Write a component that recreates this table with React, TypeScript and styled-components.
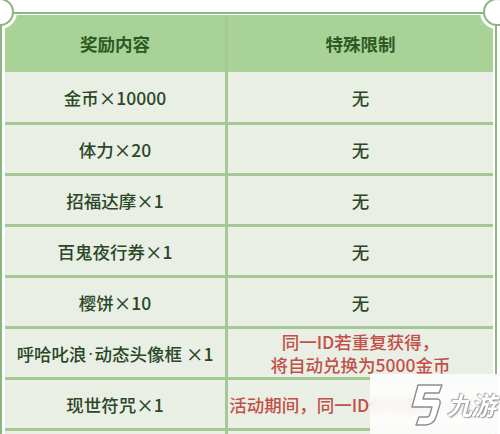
import styled, { createGlobalStyle } from 'styled-components';

const GlobalStyle = createGlobalStyle`
  html, body {
    margin: 0;
    padding: 0;
    background: #ffffff;
  }
  body {
    font-family: "Noto Sans CJK SC", "Noto Sans", sans-serif;
  }
`;

const Page = styled.div`
  position: relative;
  width: 500px;
  height: 434px;
  overflow: hidden;
  background: #ffffff;
`;

const Frame = styled.div`
  position: relative;
  margin: 12px 3px 0 0;
  border: 2px solid #8db581;
  border-bottom: none;
  padding: 1px 2px 0 3px;
  background: #ffffff;
`;

const OuterNotch = styled.span<{ $side: 'left' | 'right' }>`
  position: absolute;
  top: -16px;
  ${(p) => (p.$side === 'left' ? 'left: -16px;' : 'right: -16px;')}
  width: 28px;
  height: 28px;
  box-sizing: border-box;
  border-radius: 50%;
  border: 2px solid #8db581;
  background: #ffffff;
  z-index: 3;
`;

const Table = styled.div`
  position: relative;
  overflow: hidden;
`;

const InnerNotch = styled.span<{ $side: 'left' | 'right' }>`
  position: absolute;
  top: -20px;
  ${(p) => (p.$side === 'left' ? 'left: -22px;' : 'right: -21px;')}
  width: 34px;
  height: 34px;
  border-radius: 50%;
  background: #ffffff;
  z-index: 2;
`;

const Row = styled.div<{ $h: number; $head?: boolean }>`
  display: grid;
  grid-template-columns: 220px 265px;
  column-gap: 3px;
  box-sizing: border-box;
  height: ${(p) => p.$h}px;
  background: #a4c896;
  border-bottom: ${(p) => (p.$head ? 'none' : '3px solid #a4c896')};
`;

const Cell = styled.div<{ $head?: boolean; $red?: boolean }>`
  display: flex;
  align-items: center;
  justify-content: center;
  text-align: center;
  white-space: nowrap;
  background: ${(p) => (p.$head ? '#a9d296' : '#e9efe4')};
  color: ${(p) => (p.$head ? '#2c5a25' : p.$red ? '#c24f49' : '#2b4728')};
  font-size: 17.5px;
  line-height: 23px;
  font-weight: ${(p) => (p.$head ? 700 : 500)};
`;

const Dot = styled.span`
  font-family: "Liberation Sans", sans-serif;
  margin: 0 1px;
`;

const Watermark = styled.div`
  position: absolute;
  left: 370px;
  top: 374px;
  width: 130px;
  height: 60px;
  display: flex;
  align-items: center;
  gap: 3px;
  padding-left: 40px;
  box-sizing: border-box;
  background: rgba(255, 255, 255, 0.86);
  backdrop-filter: blur(3px);
  z-index: 5;
`;

const LogoText = styled.span`
  font-family: "Noto Sans CJK SC", sans-serif;
  font-size: 25px;
  font-weight: 700;
  font-style: italic;
  color: #ffffff;
  letter-spacing: -1px;
  text-shadow: 0 0 1px #8a8a8a, 1px 1px 1px #9a9a9a, -1px -1px 1px #b0b0b0;
`;

function LogoMark() {
  return (
    <svg width="34" height="46" viewBox="0 0 34 46">
      <path
        d="M8 4 L32 4 L29 12 L15 12 L13 18 L27 18 Q31 18 30 23 L26 36 Q24 43 16 44 L6 44 L9 36 L17 36 Q19 36 20 33 L22 26 L2 26 Z"
        fill="#ffffff"
        stroke="#8c8c8c"
        strokeWidth="1.4"
        strokeLinejoin="round"
      />
    </svg>
  );
}

type Reward = { name: React.ReactNode; key: string; limit: string[]; red?: boolean };

const rewards: Reward[] = [
  { key: 'coin', name: '金币×10000', limit: ['无'] },
  { key: 'stamina', name: '体力×20', limit: ['无'] },
  { key: 'daruma', name: '招福达摩×1', limit: ['无'] },
  { key: 'ticket', name: '百鬼夜行券×1', limit: ['无'] },
  { key: 'mochi', name: '樱饼×10', limit: ['无'] },
  {
    key: 'frame',
    name: (
      <>
        呼哈叱浪<Dot>·</Dot>动态头像框 ×1
      </>
    ),
    limit: ['同一ID若重复获得，', '将自动兑换为5000金币'],
    red: true,
  },
  { key: 'charm', name: '现世符咒×1', limit: ['活动期间，同一ID仅可获得一次。'], red: true },
];

function App() {
  return (
    <Page>
      <GlobalStyle />
      <Frame>
        <OuterNotch $side="left" />
        <OuterNotch $side="right" />
        <Table>
          <InnerNotch $side="left" />
          <InnerNotch $side="right" />
          <Row $h={57} $head>
            <Cell $head>奖励内容</Cell>
            <Cell $head>特殊限制</Cell>
          </Row>
          {rewards.map((r, i) => (
            <Row key={r.key} $h={i === 0 ? 53 : 51}>
              <Cell>{r.name}</Cell>
              <Cell $red={r.red}>
                <div>
                  {r.limit.map((line) => (
                    <div key={line}>{line}</div>
                  ))}
                </div>
              </Cell>
            </Row>
          ))}
          <Row $h={51}>
            <Cell />
            <Cell />
          </Row>
        </Table>
      </Frame>
      <Watermark>
        <LogoMark />
        <LogoText>九游</LogoText>
      </Watermark>
    </Page>
  );
}

export default App;
